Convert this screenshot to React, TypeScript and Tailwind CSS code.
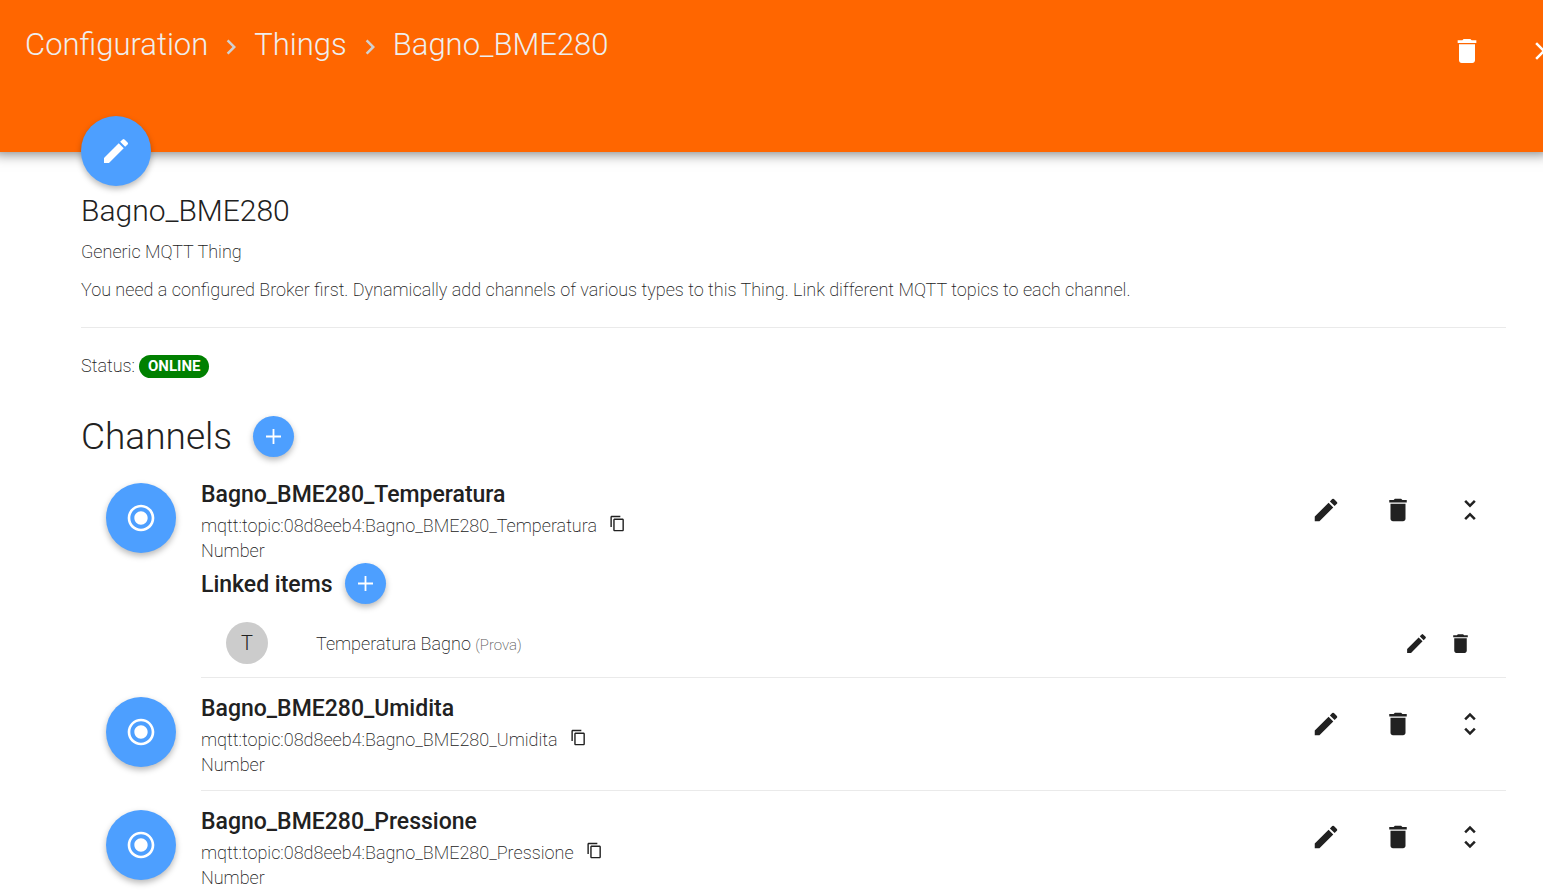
import { useState } from 'react'
import {
  MdChevronRight,
  MdClose,
  MdContentCopy,
  MdDelete,
  MdEdit,
  MdRadioButtonChecked,
  MdUnfoldLess,
  MdUnfoldMore,
} from 'react-icons/md'

interface LinkedItem {
  label: string
  name: string
}

interface Channel {
  id: string
  uid: string
  type: string
  items: LinkedItem[]
}

const channels: Channel[] = [
  {
    id: 'Bagno_BME280_Temperatura',
    uid: 'mqtt:topic:08d8eeb4:Bagno_BME280_Temperatura',
    type: 'Number',
    items: [{ label: 'Temperatura Bagno', name: 'Prova' }],
  },
  { id: 'Bagno_BME280_Umidita', uid: 'mqtt:topic:08d8eeb4:Bagno_BME280_Umidita', type: 'Number', items: [] },
  { id: 'Bagno_BME280_Pressione', uid: 'mqtt:topic:08d8eeb4:Bagno_BME280_Pressione', type: 'Number', items: [] },
]

const fabClass =
  'flex shrink-0 cursor-pointer items-center justify-center rounded-full bg-[#4d9fff] text-white shadow-[0_3px_6px_rgba(0,0,0,0.28)]'
const iconButtonClass = 'flex shrink-0 cursor-pointer items-center justify-center'

function PlusIcon() {
  return (
    <svg width="15" height="15" viewBox="0 0 15 15" stroke="currentColor" strokeWidth="1.8" aria-hidden="true">
      <path d="M7.5 0v15M0 7.5h15" />
    </svg>
  )
}

function Header() {
  return (
    <header className="flex h-[152px] items-start justify-between bg-[#ff6600] pl-[25px] shadow-[0_-4px_12px_6px_rgba(0,0,0,0.5)]">
      <nav aria-label="Breadcrumb" className="flex items-center pt-[25px] text-[31px] leading-10 text-[#eeeeee]">
        <a href="#configuration">Configuration</a>
        <MdChevronRight size={30} className="mx-2 mt-1 text-[#d0d0d0]" aria-hidden="true" />
        <a href="#things">Things</a>
        <MdChevronRight size={30} className="mx-2 mt-1 text-[#d0d0d0]" aria-hidden="true" />
        <a href="#thing">Bagno_BME280</a>
      </nav>
      <div className="-mr-4 flex gap-[46px] pt-[35px] text-white">
        <button type="button" aria-label="Delete thing" className={iconButtonClass}>
          <MdDelete size={32} />
        </button>
        <button type="button" aria-label="Close" className={iconButtonClass}>
          <MdClose size={30} />
        </button>
      </div>
    </header>
  )
}

function LinkedItems({ items }: { items: LinkedItem[] }) {
  return (
    <div>
      <div className="flex items-center gap-3">
        <h4 className="pt-0.5 text-[23px] leading-7 font-medium">Linked items</h4>
        <button type="button" aria-label="Link item" className={`${fabClass} size-[41px]`}>
          <PlusIcon />
        </button>
      </div>
      {items.map(item => (
        <div key={item.name} className="flex items-center pt-[18px] pr-6 pb-[13px] pl-[25px]">
          <span className="flex size-[42px] items-center justify-center rounded-full bg-[#cccccc] text-xl">
            {item.label[0]}
          </span>
          <p className="ml-12 flex-1 pt-0.5 text-lg leading-6 font-extralight">
            {item.label} <small className="text-[15px] text-[#555555]">({item.name})</small>
          </p>
          <button type="button" aria-label={`Edit ${item.label}`} className={`${iconButtonClass} w-11`}>
            <MdEdit size={25} />
          </button>
          <button type="button" aria-label={`Unlink ${item.label}`} className={`${iconButtonClass} w-11`}>
            <MdDelete size={25} />
          </button>
        </div>
      ))}
    </div>
  )
}

function ChannelRow({ channel }: { channel: Channel }) {
  const [open, setOpen] = useState(channel.items.length > 0)

  return (
    <li className="flex items-start gap-[25px] pl-[25px]">
      <button type="button" aria-label={`Channel ${channel.id}`} className={`${fabClass} mt-[19px] size-[70px]`}>
        <MdRadioButtonChecked size={32} />
      </button>
      <div className="min-w-0 flex-1 border-b border-[#eaeaea]">
        <div className="flex items-start justify-between">
          <div className={open ? 'pt-[17px]' : 'pt-[17px] pb-[13px]'}>
            <h3 className="mb-1 text-[23px] leading-7 font-medium">{channel.id}</h3>
            <p className="flex items-center gap-3 text-lg leading-[25px] font-extralight">
              {channel.uid}
              <button type="button" aria-label="Copy channel UID" className="mb-1 cursor-pointer">
                <MdContentCopy size={17} />
              </button>
            </p>
            <p className="text-lg leading-[25px] font-extralight">{channel.type}</p>
          </div>
          <div className="flex pt-[31px]">
            <button type="button" aria-label={`Edit ${channel.id}`} className={`${iconButtonClass} w-18`}>
              <MdEdit size={30} />
            </button>
            <button type="button" aria-label={`Delete ${channel.id}`} className={`${iconButtonClass} w-18`}>
              <MdDelete size={30} />
            </button>
            <button
              type="button"
              aria-label={open ? 'Collapse' : 'Expand'}
              aria-expanded={open}
              onClick={() => setOpen(!open)}
              className={`${iconButtonClass} w-18`}
            >
              {open ? <MdUnfoldLess size={30} /> : <MdUnfoldMore size={30} />}
            </button>
          </div>
        </div>
        {open && <LinkedItems items={channel.items} />}
      </div>
    </li>
  )
}

export default function App() {
  return (
    <div className="h-screen overflow-hidden bg-white font-['Roboto',sans-serif] font-light text-[#212121]">
      <Header />
      <main className="pr-[37px] pl-[81px]">
        <button type="button" aria-label="Edit thing" className={`${fabClass} relative -mt-9 size-[70px]`}>
          <MdEdit size={32} />
        </button>
        <h1 className="mt-[5px] text-[30px] leading-10">Bagno_BME280</h1>
        <p className="mt-2 text-lg leading-[26px] font-extralight">Generic MQTT Thing</p>
        <p className="mt-3 text-lg leading-[26px] font-extralight">
          You need a configured Broker first. Dynamically add channels of various types to this Thing. Link different
          MQTT topics to each channel.
        </p>
        <hr className="mt-6 border-[#eaeaea]" />
        <p className="mt-6 flex items-center gap-1 text-lg leading-7 font-extralight">
          Status:
          <span className="rounded-full bg-[#008000] px-[9px] text-[15px] leading-[23px] font-bold text-white">
            ONLINE
          </span>
        </p>
        <section>
          <div className="mt-9 flex items-center gap-[21px]">
            <h2 className="text-[37px] leading-10">Channels</h2>
            <button type="button" aria-label="Add channel" className={`${fabClass} size-[41px]`}>
              <PlusIcon />
            </button>
          </div>
          <ul className="mt-[7px]">
            {channels.map(channel => (
              <ChannelRow key={channel.id} channel={channel} />
            ))}
          </ul>
        </section>
      </main>
    </div>
  )
}
